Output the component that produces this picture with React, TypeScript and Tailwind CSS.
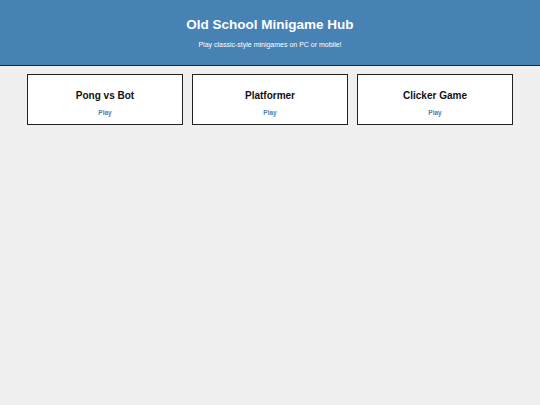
const games = ["Pong vs Bot", "Platformer", "Clicker Game"];

export default function App() {
  return (
    <div className="min-h-[405px] bg-[#f0f0f0] font-['Liberation_Sans',Arial,sans-serif]">
      <header className="h-[66px] border-b border-[#1e2a36] bg-[#4682b4] pt-[17px] text-center text-white">
        <h1 className="text-[13.5px] font-bold leading-[16px]">Old School Minigame Hub</h1>
        <p className="mt-[8px] text-[7px] leading-[8px]">Play classic-style minigames on PC or mobile!</p>
      </header>

      <main className="mx-auto mt-[8px] grid w-[486px] grid-cols-3 gap-[9px]">
        {games.map((name) => (
          <div
            key={name}
            className="flex h-[51px] flex-col items-center border border-[#222] bg-white pt-[15px]"
          >
            <h2 className="text-[10px] font-bold leading-[12px] text-[#111]">{name}</h2>
            <a className="mt-[7px] text-[6.5px] font-bold leading-[8px] text-[#4682b4]">Play</a>
          </div>
        ))}
      </main>
    </div>
  );
}
